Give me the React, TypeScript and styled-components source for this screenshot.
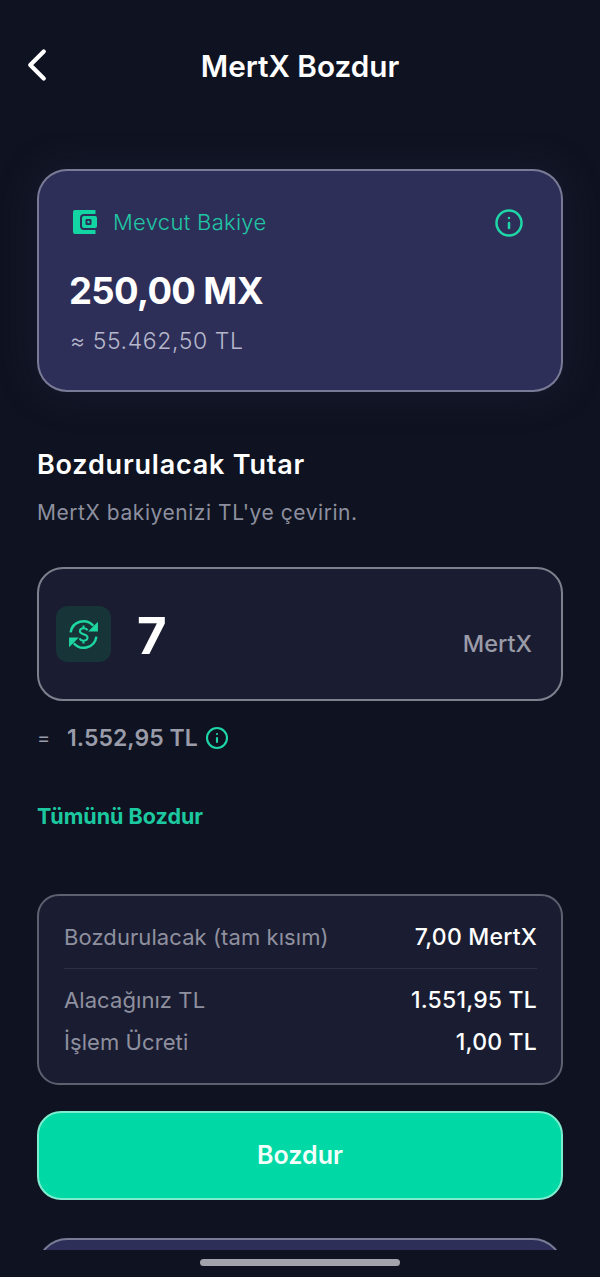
import styled, { createGlobalStyle } from "styled-components";
import { ChevronLeft, Info } from "lucide-react";

const Global = createGlobalStyle`
  html, body {
    margin: 0;
    padding: 0;
    background: #0f1321;
  }
  * {
    box-sizing: border-box;
  }
`;

const Screen = styled.div`
  width: 600px;
  height: 1277px;
  overflow: hidden;
  background: #0f1321;
  font-family: Inter, "Noto Sans", sans-serif;
  color: #fff;
  display: flex;
  flex-direction: column;
`;

const Header = styled.header`
  height: 132px;
  padding-top: 48px;
  display: grid;
  grid-template-columns: 100px 1fr 100px;
  align-items: start;
  flex-shrink: 0;
`;

const BackButton = styled.button`
  background: none;
  border: none;
  padding: 0 0 2px 10px;
  height: 36px;
  color: #fff;
  display: flex;
  align-items: center;
`;

const Title = styled.h1`
  margin: 0;
  font-size: 29.7px;
  line-height: 36px;
  font-weight: 600;
  text-align: center;
  white-space: nowrap;
`;

const Scroll = styled.main`
  height: 1118px;
  overflow: hidden;
  padding: 37px 37px 0;
  flex-shrink: 0;
`;

const BalanceCard = styled.section`
  height: 223px;
  border-radius: 30px;
  border: 2px solid rgba(255, 255, 255, 0.36);
  background: #2e2f59;
  padding: 35px 37px 0 30px;
  box-shadow: 0 0 40px rgba(46, 47, 89, 0.25);
`;

const BalanceTop = styled.div`
  display: flex;
  align-items: center;
  justify-content: space-between;
  height: 34px;
`;

const BalanceLabel = styled.div`
  display: flex;
  align-items: center;
  gap: 15px;
  margin-left: 3px;
  padding-bottom: 2px;
  font-size: 22px;
  font-weight: 300;
  letter-spacing: 0.3px;
  color: #1fc7a5;
`;

const InfoWrap = styled.span<{ $size: number }>`
  display: inline-flex;
  color: #1ed6a6;
  width: ${(p) => p.$size}px;
  height: ${(p) => p.$size}px;
`;

const BalanceAmount = styled.div`
  margin-top: 28px;
  font-size: 36.5px;
  line-height: 46px;
  font-weight: 700;
  letter-spacing: -0.65px;
`;

const BalanceTl = styled.div`
  margin-top: 12px;
  margin-left: 1px;
  font-size: 23px;
  line-height: 30px;
  font-weight: 300;
  letter-spacing: 0.6px;
  color: #b6b7cb;
`;

const SectionTitle = styled.h2`
  margin: 54px 0 0;
  font-size: 27px;
  line-height: 38px;
  font-weight: 600;
  letter-spacing: 0.8px;
`;

const SectionHint = styled.p`
  margin: 15px 0 0;
  font-size: 21px;
  line-height: 28px;
  font-weight: 400;
  letter-spacing: 0.55px;
  color: #8d8f9e;
`;

const AmountBox = styled.div`
  margin-top: 40px;
  height: 134px;
  border-radius: 26px;
  border: 2px solid #7e808e;
  background: #1a1d31;
  padding: 0 29px 0 17px;
  display: flex;
  align-items: center;
`;

const IconTile = styled.div`
  width: 55px;
  height: 56px;
  border-radius: 12px;
  background: #173438;
  display: flex;
  align-items: center;
  justify-content: center;
  flex-shrink: 0;
`;

const AmountValue = styled.div`
  margin-left: 26px;
  padding-top: 3px;
  font-size: 51px;
  line-height: 56px;
  font-weight: 700;
  flex: 1;
`;

const AmountUnit = styled.div`
  padding-top: 18px;
  font-size: 23.5px;
  font-weight: 500;
  color: #9a9ba8;
`;

const Converted = styled.div`
  margin-top: 20px;
  height: 34px;
  display: flex;
  align-items: center;
  font-size: 23px;
  font-weight: 600;
  color: #9a9ca9;
`;

const EqualSign = styled.span`
  width: 30px;
  font-weight: 400;
  font-size: 20px;
`;

const ConvertedValue = styled.span`
  margin-right: 7px;
  letter-spacing: 0.05px;
`;

const SellAll = styled.button`
  display: block;
  margin: 47px 0 0;
  padding: 0;
  border: none;
  background: none;
  font-family: inherit;
  font-size: 21.5px;
  line-height: 28px;
  font-weight: 700;
  color: #1cc8a0;
`;

const Summary = styled.section`
  margin-top: 64px;
  height: 191px;
  border-radius: 22px;
  border: 2px solid #5e6070;
  background: #1a1d31;
  padding: 24px 24px 0 25px;
`;

const Row = styled.div<{ $gap?: number }>`
  display: flex;
  justify-content: space-between;
  align-items: center;
  height: 34px;
  margin-top: ${(p) => p.$gap ?? 0}px;
  font-size: 22px;
`;

const RowLabel = styled.span`
  color: #8f909f;
  font-weight: 400;
  letter-spacing: 0.08px;
`;

const RowValue = styled.span`
  font-weight: 500;
  letter-spacing: 0.2px;
  font-size: 23px;
`;

const Divider = styled.hr`
  margin: 14px 0;
  border: none;
  height: 1px;
  background: #2d3042;
`;

const PrimaryButton = styled.button`
  display: block;
  width: 100%;
  margin-top: 26px;
  padding: 0 0 2px;
  height: 89px;
  border-radius: 24px;
  border: 2px solid #7eecce;
  background: #00d9a5;
  color: #f2fffb;
  font-family: inherit;
  font-size: 25px;
  font-weight: 600;
`;

const NextCard = styled.div`
  margin-top: 38px;
  height: 60px;
  border-radius: 30px;
  border: 2px solid rgba(255, 255, 255, 0.36);
  background: #2e2f59;
`;

const HomeBar = styled.div`
  flex: 1;
  display: flex;
  justify-content: center;
  padding-top: 9px;
`;

const HomeIndicator = styled.div`
  width: 200px;
  height: 7px;
  border-radius: 4px;
  background: #a3a3ad;
`;

function WalletIcon() {
  return (
    <svg width="26" height="26" viewBox="0 0 26 26">
      <path
        fill="#12d5a3"
        d="M3 1h20.5v4H12a4 4 0 0 0-4 4v8a4 4 0 0 0 4 4h11.5v4H3a2 2 0 0 1-2-2V3a2 2 0 0 1 2-2z"
      />
      <rect x="10" y="7" width="15" height="12" rx="2" fill="#12d5a3" />
      <rect x="13.5" y="10" width="6" height="6" rx="1.2" fill="#2e2f59" />
      <circle cx="16.5" cy="13" r="1.2" fill="#12d5a3" />
    </svg>
  );
}

function ExchangeIcon() {
  return (
    <svg
      width="35"
      height="35"
      viewBox="0 0 34 34"
      fill="none"
      stroke="#1ed6a0"
      strokeWidth="2.4"
    >
      <path d="M4.500 15A12.600 12.600 0 0 1 26.500 8.500" />
      <path d="M29.500 19A12.600 12.600 0 0 1 7.500 25.500" />
      <path d="M31 4.500v9.500h-9.500z" fill="#1ed6a0" stroke="none" />
      <path d="M3 29.500V20h9.500z" fill="#1ed6a0" stroke="none" />
      <path
        strokeWidth="2"
        d="M20.800 13c-.6-1.300-1.900-2-3.700-2-2.100 0-3.600 1-3.600 2.800 0 3.800 7.400 2 7.400 6.200 0 1.900-1.600 3-3.800 3-1.900 0-3.300-.8-3.900-2.200M17 8.300V11M17 23v2.700"
      />
    </svg>
  );
}

export default function App() {
  return (
    <Screen>
      <Global />
      <Header>
        <BackButton aria-label="Geri">
          <ChevronLeft size={54} strokeWidth={1.9} />
        </BackButton>
        <Title>MertX Bozdur</Title>
      </Header>
      <Scroll>
        <BalanceCard>
          <BalanceTop>
            <BalanceLabel>
              <WalletIcon />
              Mevcut Bakiye
            </BalanceLabel>
            <InfoWrap $size={30}>
              <Info size={30} strokeWidth={2} />
            </InfoWrap>
          </BalanceTop>
          <BalanceAmount>250,00 MX</BalanceAmount>
          <BalanceTl>≈ 55.462,50 TL</BalanceTl>
        </BalanceCard>

        <SectionTitle>Bozdurulacak Tutar</SectionTitle>
        <SectionHint>MertX bakiyenizi TL'ye çevirin.</SectionHint>

        <AmountBox>
          <IconTile>
            <ExchangeIcon />
          </IconTile>
          <AmountValue>7</AmountValue>
          <AmountUnit>MertX</AmountUnit>
        </AmountBox>

        <Converted>
          <EqualSign>=</EqualSign>
          <ConvertedValue>1.552,95 TL</ConvertedValue>
          <InfoWrap $size={24}>
            <Info size={24} strokeWidth={2.1} />
          </InfoWrap>
        </Converted>

        <SellAll>Tümünü Bozdur</SellAll>

        <Summary>
          <Row>
            <RowLabel>Bozdurulacak (tam kısım)</RowLabel>
            <RowValue>7,00 MertX</RowValue>
          </Row>
          <Divider />
          <Row>
            <RowLabel>Alacağınız TL</RowLabel>
            <RowValue>1.551,95 TL</RowValue>
          </Row>
          <Row $gap={8}>
            <RowLabel>İşlem Ücreti</RowLabel>
            <RowValue>1,00 TL</RowValue>
          </Row>
        </Summary>

        <PrimaryButton>Bozdur</PrimaryButton>
        <NextCard />
      </Scroll>
      <HomeBar>
        <HomeIndicator />
      </HomeBar>
    </Screen>
  );
}
